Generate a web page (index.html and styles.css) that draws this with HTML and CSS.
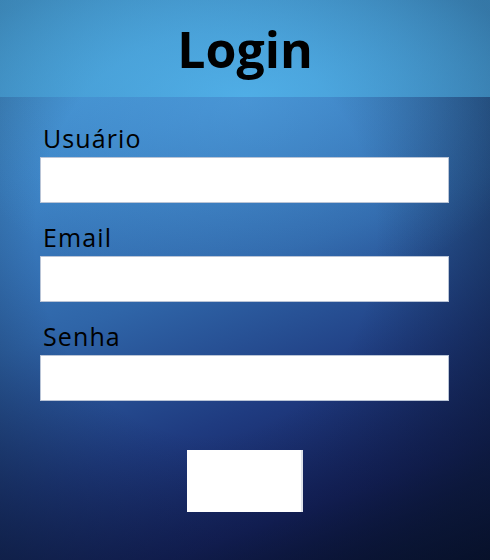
FILE: index.html
```html
<!DOCTYPE html>
<html lang="pt-BR">
<head>
<meta charset="utf-8">
<title>Login</title>
<link rel="stylesheet" href="styles.css">
</head>
<body>
<div class="page">
  <header class="top">
    <h1 class="title">Login</h1>
  </header>
  <form class="form">
    <label class="label" for="u">Usuário</label>
    <input class="field" id="u" type="text">
    <label class="label" for="e">Email</label>
    <input class="field" id="e" type="email">
    <label class="label" for="s">Senha</label>
    <input class="field" id="s" type="password">
    <div class="actions">
      <button class="btn" type="button"></button>
    </div>
  </form>
</div>
</body>
</html>
```
FILE: styles.css
```css
html, body {
  margin: 0;
  padding: 0;
  height: 100%;
}
body {
  background: #030620;
}
.page {
  height: 560px;
  background:
    radial-gradient(ellipse 300px 200px at 50% 18%, rgba(90, 175, 235, 0.4) 0%, rgba(90, 175, 235, 0) 100%),
    radial-gradient(ellipse 340px 400px at 42% 42%, rgba(0, 0, 0, 0) 50%, rgba(10, 24, 50, 0.6) 100%),
    linear-gradient(160deg, #4a9fd8 0%, #3d84c6 25%, #2f65a8 48%, #1f3b80 68%, #141f5c 84%, #03061e 100%);
  font-family: "Open Sans", "Liberation Sans", sans-serif;
}
.top {
  height: 97px;
  display: flex;
  align-items: center;
  justify-content: center;
  background: radial-gradient(ellipse 320px 130px at 50% 100%, rgba(82, 182, 236, 0.75), rgba(66, 150, 200, 0.62));
}
.title {
  margin: 0;
  font-size: 50px;
  font-weight: 700;
  color: #000;
  line-height: 1;
}
.form {
  display: flex;
  flex-direction: column;
  padding: 27px 41px 0 40px;
}
.label {
  font-size: 25px;
  font-weight: 500;
  line-height: 28px;
  letter-spacing: 1.1px;
  color: #000;
  margin: 0 0 5px 3px;
}
.field {
  height: 46px;
  box-sizing: border-box;
  border: 1px solid #b9c4d6;
  background: #fff;
  margin: 0 0 20px 0;
  padding: 0;
}
.actions {
  display: flex;
  justify-content: center;
  padding-top: 29px;
}
.btn {
  width: 116px;
  height: 62px;
  background: #fff;
  border: none;
  border-right: 2px solid #dfe3ea;
  padding: 0;
}
```
